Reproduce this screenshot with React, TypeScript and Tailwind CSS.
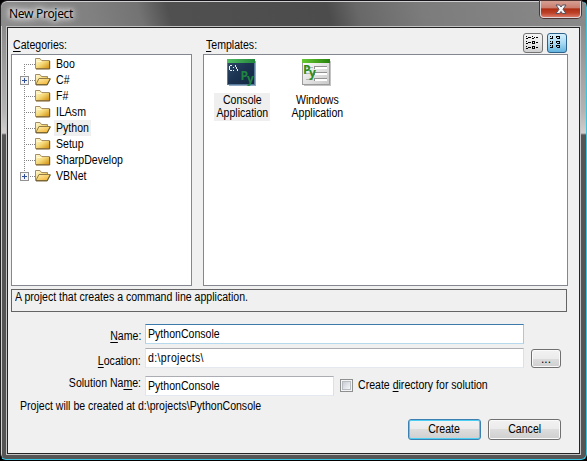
import React from "react";
import { clsx } from "clsx";

type Category = { name: string; open?: boolean; expandable?: boolean; selected?: boolean; width: string };

const categories: Category[] = [
  { name: "Boo", width: "w-[23px]" },
  { name: "C#", open: true, expandable: true, width: "w-[19px]" },
  { name: "F#", width: "w-[19px]" },
  { name: "ILAsm", width: "w-[34px]" },
  { name: "Python", open: true, selected: true, width: "w-[37px]" },
  { name: "Setup", width: "w-[34px]" },
  { name: "SharpDevelop", width: "w-[72px]" },
  { name: "VBNet", open: true, expandable: true, width: "w-[36px]" },
];

function Gradients() {
  return (
    <svg width="0" height="0" className="absolute">
      <defs>
        <linearGradient id="folder" x1="0" y1="0" x2="1" y2="1">
          <stop offset="0" stopColor="#fffbe0" />
          <stop offset="0.5" stopColor="#f5d978" />
          <stop offset="1" stopColor="#d08c08" />
        </linearGradient>
        <linearGradient id="flap" x1="0" y1="0" x2="1" y2="1">
          <stop offset="0" stopColor="#fff3b8" />
          <stop offset="1" stopColor="#f2ad22" />
        </linearGradient>
        <linearGradient id="green" x1="0" y1="0" x2="1" y2="0">
          <stop offset="0" stopColor="#52bd65" />
          <stop offset="1" stopColor="#23863a" />
        </linearGradient>
        <linearGradient id="lime" x1="0" y1="0" x2="1" y2="0">
          <stop offset="0" stopColor="#67c934" />
          <stop offset="1" stopColor="#26820c" />
        </linearGradient>
        <linearGradient id="screen" x1="0" y1="0" x2="1" y2="1">
          <stop offset="0" stopColor="#2f4a68" />
          <stop offset="0.5" stopColor="#1b3350" />
          <stop offset="1" stopColor="#122945" />
        </linearGradient>
        <linearGradient id="paper" x1="0" y1="0" x2="1" y2="1">
          <stop offset="0" stopColor="#ffffff" />
          <stop offset="1" stopColor="#c9c9c9" />
        </linearGradient>
      </defs>
    </svg>
  );
}

function Folder({ open }: { open?: boolean }) {
  return (
    <svg width="16" height="16" viewBox="0 0 16 16" className="shrink-0">
      {open ? (
        <>
          <path d="M.5 12.5V2.5H5L6.5 4.5H12.5V7" fill="url(#folder)" stroke="#a18e65" />
          <path d="M4 6.5H15.3L12 12.5H.8Z" fill="url(#flap)" stroke="#8f7b43" />
          <path d="M1 13H12.3L15.3 7" fill="none" stroke="#5d4a1b" strokeWidth=".8" />
        </>
      ) : (
        <>
          <path d="M.5 12.5V2.5H5L6.5 4.5H14.5V12.5Z" fill="url(#folder)" stroke="#a59065" />
          <path d="M1 13H14.7V5" fill="none" stroke="#795719" />
          <path d="M1.5 5.5H6L7 5" fill="none" stroke="#fff7c9" />
        </>
      )}
    </svg>
  );
}

function TreeLines({ first, last, expandable }: { first: boolean; last: boolean; expandable?: boolean }) {
  return (
    <svg width="15" height="16" viewBox="0 0 15 16" className="shrink-0" shapeRendering="crispEdges">
      <path
        d={clsx(!first && "M4.5 0V8", !last && "M4.5 8V16", "M4 8.5H15")}
        stroke="#858585"
        strokeDasharray="1 1"
        fill="none"
      />
      {expandable && (
        <>
          <rect x=".5" y="4.5" width="8" height="8" fill="#f5f5f5" stroke="#929292" />
          <path d="M2 8.5H7M4.5 6V11" stroke="#314f96" />
        </>
      )}
    </svg>
  );
}

function ConsoleIcon() {
  return (
    <svg width="30" height="28" viewBox="0 0 30 28">
      <rect x="2" y="2" width="27" height="25" fill="#91aac4" />
      <rect x=".5" y=".5" width="27" height="25" fill="url(#screen)" stroke="#58799a" />
      <rect width="28" height="4" fill="url(#green)" />
      <g fill="none" stroke="#e8f1fa" shapeRendering="crispEdges">
        <path d="M3 6.5H5M2.5 7V11M3 11.5H5M6.5 8V9M6.5 11V12M8.5 6V8M9.5 8V10M10.5 10V12" />
      </g>
      <text x="13.5" y="20.5" fill="#20863f" className="font-['Open_Sans',sans-serif] text-[12px] font-bold">P</text>
      <text x="20" y="23.5" fill="#20863f" className="font-['Open_Sans',sans-serif] text-[12px] font-bold">y</text>
    </svg>
  );
}

function FormIcon() {
  return (
    <svg width="30" height="28" viewBox="0 0 30 28">
      <rect x="2" y="2" width="27" height="25" fill="#c3c3c3" />
      <rect x=".5" y=".5" width="27" height="25" fill="url(#paper)" stroke="#9b9b9b" />
      <rect width="28" height="4" fill="url(#lime)" />
      <g shapeRendering="crispEdges">
        {[7, 13, 19].map((y) => (
          <React.Fragment key={y}>
            <path d={`M4 ${y + 1.5}H11`} stroke="#b5b5b5" />
            <rect x="12" y={y} width="13" height="3" fill="#fff" />
            <path d={`M12.5 ${y + 3}V${y + 0.5}H25`} stroke="#929292" fill="none" />
          </React.Fragment>
        ))}
      </g>
      <text x="1" y="14.5" fill="#288d1d" className="font-['Open_Sans',sans-serif] text-[12px] font-bold">P</text>
      <text x="7" y="17.5" fill="#288d1d" className="font-['Open_Sans',sans-serif] text-[12px] font-bold">y</text>
    </svg>
  );
}

function ViewButton({ active }: { active?: boolean }) {
  return (
    <button
      className={clsx(
        "h-5 w-5 rounded-[3px] border p-px",
        active
          ? "border-[#2c628b] bg-linear-to-b from-[#d5effc] via-[#a9daf3] to-[#63b4df]"
          : "border-[#747474] bg-linear-to-b from-[#f4f4f4] via-[#e9e9e9] to-[#cfcfcf]",
      )}
    >
      <svg width="16" height="16" viewBox="0 0 16 16" shapeRendering="crispEdges" fill="none" stroke="#000">
        {active ? (
          <>
            {[1, 6, 10].map((y) => (
              <React.Fragment key={y}>
                <path d={`M1 ${y + 0.5}H2M3.5 ${y}V${y + 3}M1 ${y + 2.5}H4`} />
                <path d={`M7 ${y + 0.5}H11M7.5 ${y}V${y + 2}M10.5 ${y + 1}V${y + 3}M8 ${y + 2.5}H11`} />
              </React.Fragment>
            ))}
          </>
        ) : (
          <>
            {[2, 7, 12].map((y, i) => (
              <React.Fragment key={y}>
                <path d={`M1 ${y - 0.5}H2M1 ${y + 1.5}H3M3.5 ${y}V${y + 1}M4 ${y + 0.5}H6`} />
                <path d={i ? `M7 ${y - 0.5}H10M7.5 ${y}V${y + 2}M7 ${y + 1.5}H10M9.5 ${y}V${y + 2}M11 ${y + 0.5}H13` : `M7 ${y - 0.5}H8M7 ${y + 1.5}H9M9.5 ${y}V${y + 1}M11 ${y + 0.5}H13`} />
              </React.Fragment>
            ))}
          </>
        )}
      </svg>
    </button>
  );
}

type Align = "left" | "center" | "right";

/* Condensed label text, as drawn by the dialog's narrow UI face. */
function Narrow({ align = "left", children }: { align?: Align; children: React.ReactNode }) {
  return (
    <span
      className={clsx(
        "inline-block scale-x-[0.88] whitespace-nowrap",
        align === "left" && "origin-left",
        align === "center" && "origin-center",
        align === "right" && "origin-right",
      )}
    >
      {children}
    </span>
  );
}

function TemplateItem({ title, selected, children }: { title: string; selected?: boolean; children: React.ReactNode }) {
  return (
    <div className="flex w-14 flex-col items-center">
      {children}
      <div
        className={clsx(
          "mt-[6px] flex h-[28px] w-14 justify-center pt-px text-center leading-[13px]",
          selected && "bg-[#efefef]",
        )}
      >
        <Narrow align="center">
          {title}
          <br />
          Application
        </Narrow>
      </div>
    </div>
  );
}

const field =
  "h-5 border border-t-[#abadb3] border-r-[#dbdfe6] border-b-[#e3e9ef] border-l-[#e2e3ea] bg-white pl-[2px] leading-[18px] outline-none";
const button =
  "rounded-[3px] border border-[#707070] bg-[linear-gradient(#f2f2f2_0%,#ebebeb_50%,#dddddd_50%,#cfcfcf_100%)] shadow-[inset_0_0_0_1px_#fafafa] text-center";

function Key({ children }: { children: React.ReactNode }) {
  return <span className="underline decoration-1 underline-offset-[2px]">{children}</span>;
}

export default function App() {
  return (
    <div className="flex h-[461px] w-[587px] flex-col overflow-hidden bg-black font-['Liberation_Sans',Arial,sans-serif] text-[12px] text-black">
      <Gradients />
      <div className="flex h-[460px] w-[587px] flex-col rounded-t-[7px] rounded-b-[6px] border border-t-[#17131a] border-r-[#35c7e3] border-b-[#35c7e3] border-l-[#242424] bg-[linear-gradient(#8b8b8b_0px,#8b8b8b_24px,#b5b3b3_110px,#d1cecd_132px,#555_134px,#555_100%)] px-[5px] shadow-[inset_1px_1px_0_#cfcfcf]">
        <header className="-mx-[5px] mt-px flex h-[24px] shrink-0 justify-between rounded-t-[6px] bg-[linear-gradient(75deg,#8c8c8c_0%,#808080_16%,#737373_24%,#505050_29%,#4c4c4c_56%,#686868_61%,#7c7c7c_72%,#8a8a8a_100%)] pr-[5px] pl-[8px]">
          <h1 className="relative z-10 mt-[3px] font-['Noto_Sans','Open_Sans',sans-serif] text-[12px] leading-[17px] tracking-[-0.3px] [text-shadow:0_0_4px_#fff,0_0_8px_#fff,0_0_10px_#fff]">
            New Project
          </h1>
          <button className="-mt-px flex h-[17px] w-[41px] items-center justify-center rounded-b-[4px] border border-t-0 border-[#ded6d6] bg-[linear-gradient(#d7a094_0%,#c97b6c_45%,#ad2c12_48%,#bd4228_75%,#da7767_100%)] shadow-[0_0_0_1px_#513532]">
            <svg width="12" height="11" viewBox="0 0 12 11">
              <path d="M1 1H4.5L6 3L7.5 1H11L8 5.3L11 9.5H7.5L6 7.5L4.5 9.5H1L4 5.3Z" fill="#f7f7f7" stroke="#57535e" />
            </svg>
          </button>
        </header>
        <main className="flex h-[429px] w-[575px] shrink-0 flex-col border border-[#c3c3c3] bg-[#f0f0f0]">
          <div className="flex h-[427px] flex-col border border-[#242424] pl-[3px]">
            <div className="flex h-[26px] items-start">
              <label className="w-[192px] pt-[10px] pl-[2px] leading-[14px]"><Narrow><Key>C</Key>ategories:</Narrow></label>
              <label className="w-[320px] pt-[10px] pl-[3px] leading-[14px]"><Narrow><Key>T</Key>emplates:</Narrow></label>
              <div className="flex gap-1 pt-[5px]">
                <ViewButton />
                <ViewButton active />
              </div>
            </div>
            <div className="flex h-[232px] shrink-0 gap-[11px]">
              <ul className="w-[181px] border border-[#828790] bg-white pt-px pl-[8px]">
                {categories.map((c, i) => (
                  <li key={c.name} className="flex h-4 items-center">
                    <TreeLines first={i === 0} last={i === categories.length - 1} expandable={c.expandable} />
                    <Folder open={c.open} />
                    <span className={clsx("ml-[3px] h-4 pl-[2px] leading-[16px]", c.width, c.selected && "bg-[#efefef]")}>
                      <Narrow>{c.name}</Narrow>
                    </span>
                  </li>
                ))}
              </ul>
              <div className="flex w-[365px] gap-[19px] border border-[#828790] bg-white pt-1 pl-[10px]">
                <TemplateItem title="Console" selected><ConsoleIcon /></TemplateItem>
                <TemplateItem title="Windows"><FormIcon /></TemplateItem>
              </div>
            </div>
            <p className="mt-[3px] h-[23px] w-[556px] shrink-0 border border-[#646464] pl-[3px] leading-[14px]">
              <Narrow>A project that creates a command line application.</Narrow>
            </p>
            <div className="mt-3 flex h-5 shrink-0">
              <label className="w-[134px] pt-[5px] pr-[4px] text-right leading-[14px]"><Narrow align="right"><Key>N</Key>ame:</Narrow></label>
              <div className={clsx(field, "w-[379px] border-t-[#3d7bad]! border-r-[#a4c9e3]! border-b-[#b7d9ed]! border-l-[#b5cfe7]!")}><Narrow>PythonConsole</Narrow></div>
            </div>
            <div className="mt-1 flex h-5 shrink-0">
              <label className="w-[134px] pt-[6px] pr-[4px] text-right leading-[14px]"><Narrow align="right"><Key>L</Key>ocation:</Narrow></label>
              <div className={clsx(field, "w-[379px] tracking-[0.4px]")}><Narrow>d:\projects\</Narrow></div>
              <button className={clsx(button, "mt-px ml-[7px] h-[19px] w-[30px] leading-[18px]")}>...</button>
            </div>
            <div className="mt-2 flex h-5 shrink-0">
              <label className="w-[134px] pr-[4px] text-right leading-[14px]"><Narrow align="right">Solution Na<Key>m</Key>e:</Narrow></label>
              <div className={clsx(field, "w-[189px]")}><Narrow>PythonConsole</Narrow></div>
              <span className="mt-[3px] ml-[6px] h-[13px] w-[13px] border border-[#8e8f8f] bg-[#f4f4f4] p-px">
                <span className="block h-[9px] w-[9px] border border-[#b7bcc3] bg-linear-to-br from-[#c8cdd5] to-[#f7f7f7]" />
              </span>
              <label className="mt-[2px] ml-[5px] leading-[14px]"><Narrow>Create <Key>d</Key>irectory for solution</Narrow></label>
            </div>
            <p className="mt-[3px] h-[15px] shrink-0 pl-[9px] leading-[15px]"><Narrow>Project will be created at d:\projects\PythonConsole</Narrow></p>
            <div className="mt-[5px] flex h-[21px] shrink-0 gap-[7px] pl-[397px]">
              <button className={clsx(button, "w-[73px] border-[#3c7fb1]! shadow-[inset_0_0_0_1px_#4bd0f4]! leading-[19px]")}><Narrow align="center">Create</Narrow></button>
              <button className={clsx(button, "w-[73px] leading-[19px]")}><Narrow align="center">Cancel</Narrow></button>
            </div>
          </div>
        </main>
      </div>
    </div>
  );
}
